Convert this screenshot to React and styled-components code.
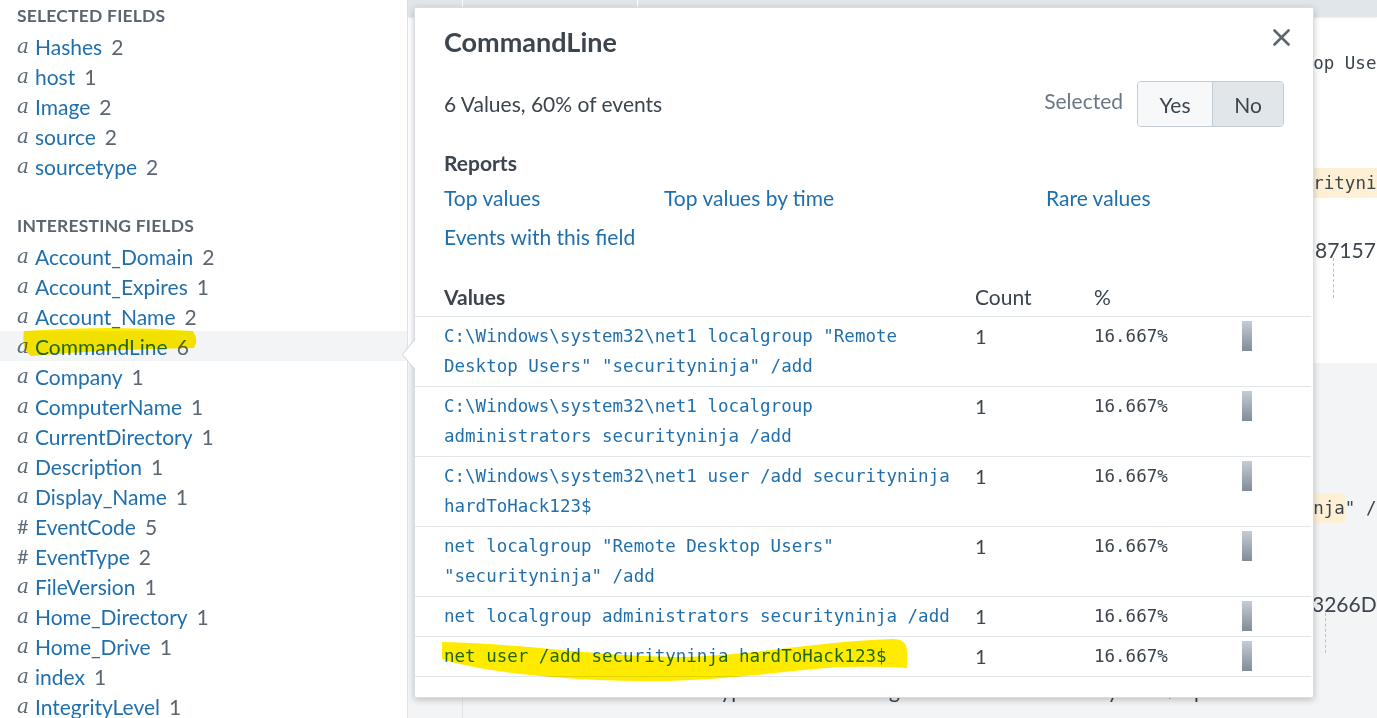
import React from "react";
import styled, { createGlobalStyle } from "styled-components";

const SANS = `Lato, "Open Sans", "Liberation Sans", sans-serif`;
const MONO = `"DejaVu Sans Mono", "Liberation Mono", monospace`;
const SERIF = `"DejaVu Serif", "Liberation Serif", serif`;

const GlobalStyle = createGlobalStyle`
  html, body { margin: 0; padding: 0; background: #fff; }
  body { font-family: ${SANS}; overflow: hidden; }
  * { box-sizing: border-box; }
`;

const Page = styled.div`
  position: relative;
  display: flex;
  width: 1377px;
  height: 718px;
  overflow: hidden;
  background: #fff;
`;

/* ---------- sidebar ---------- */
const Sidebar = styled.aside`
  flex: 0 0 408px;
  border-right: 1px solid #dfe3e8;
  padding-top: 1px;
  background: #fff;
`;

const SectionTitle = styled.div`
  padding-left: 17px;
  height: 30px;
  line-height: 30px;
  margin-top: ${(p) => (p.$gap ? "30px" : "0")};
  font-size: 17.5px;
  font-weight: 700;
  letter-spacing: 0.2px;
  color: #5c6670;
  text-transform: uppercase;
`;

const FieldRow = styled.div`
  display: flex;
  align-items: center;
  height: 30px;
  padding-left: 17px;
  background: ${(p) => (p.$active ? "#f2f4f5" : "transparent")};
  font-size: 21px;
  white-space: nowrap;
`;

const TypeGlyph = styled.span`
  flex: 0 0 18px;
  color: #5f6b78;
  font-family: ${(p) => (p.$num ? SANS : SERIF)};
  font-style: ${(p) => (p.$num ? "normal" : "italic")};
  font-size: 20px;
`;

const FieldName = styled.span`
  color: #1f6fad;
`;

const FieldCount = styled.span`
  margin-left: 9px;
  color: #5c6670;
`;

/* ---------- main event list ---------- */
const Main = styled.main`
  flex: 1;
  min-width: 0;
  display: flex;
  flex-direction: column;
  background: #f2f4f5;
`;

const TableHead = styled.div`
  flex: 0 0 17px;
  display: flex;
  background: #e1e6eb;
  box-shadow: 0 1px 2px rgba(0, 0, 0, 0.08);
  position: relative;
  z-index: 1;
`;

const HeadCell = styled.div`
  flex: ${(p) => (p.$w ? `0 0 ${p.$w}px` : "1")};
  border-left: ${(p) => (p.$sep ? "1px solid #fff" : "none")};
`;

const EventRow = styled.div`
  display: flex;
  flex: ${(p) => (p.$h ? `0 0 ${p.$h}px` : "1")};
  background: ${(p) => p.$bg};
  min-height: 0;
`;

const ExpandCell = styled.div`
  flex: 0 0 54px;
`;

const TimeCell = styled.div`
  flex: 0 0 175px;
  border-left: 1px solid #e1e6eb;
`;

const EventCell = styled.div`
  flex: 1;
  min-width: 0;
  padding: ${(p) => p.$top}px 0 0 15px;
  overflow: hidden;
  color: #3c444d;
`;

const RawLine = styled.div`
  font-family: ${MONO};
  font-size: 17.5px;
  line-height: 30px;
  height: 30px;
  white-space: pre;
  padding-left: 8px;
`;

const Mark = styled.span`
  background: #fdf0d5;
  display: inline-block;
  height: 30px;
`;

const FieldLine = styled.div`
  display: flex;
  margin-top: ${(p) => p.$mt}px;
  font-size: 21px;
  line-height: 30px;
  height: 30px;
  white-space: nowrap;
`;

const FieldKey = styled.span`
  flex: 0 0 ${(p) => p.$w}px;
  overflow: hidden;
`;

const DashLine = styled.div`
  margin: ${(p) => p.$mt}px 0 0 ${(p) => p.$ml}px;
  height: 40px;
  width: 0;
  border-left: 1px dashed #b8c0c9;
`;

const MetaLine = styled.div`
  margin-top: ${(p) => p.$mt}px;
  font-size: 21px;
  line-height: 30px;
  white-space: nowrap;
`;

/* ---------- popover ---------- */
const Popover = styled.section`
  position: absolute;
  left: 414px;
  top: 7px;
  width: 900px;
  height: 691px;
  background: #fff;
  border: 1px solid #d8dde3;
  border-radius: 2px;
  box-shadow: 0 2px 7px rgba(0, 0, 0, 0.22);
  z-index: 5;
  color: #3c444d;
  font-size: 21px;
`;

const Caret = styled.svg`
  position: absolute;
  left: -13px;
  top: 331px;
  overflow: visible;
`;

const PopHeader = styled.div`
  display: flex;
  justify-content: space-between;
  align-items: flex-start;
  padding: 17px 23px 0 29px;
`;

const PopTitle = styled.h2`
  margin: 0;
  font-size: 27px;
  line-height: 34px;
  font-weight: 700;
  color: #3c444d;
`;

const CloseButton = styled.button`
  margin-top: 3px;
  width: 18px;
  height: 18px;
  padding: 0;
  border: 0;
  background: none;
  display: flex;
  align-items: center;
  justify-content: center;
`;

const SummaryRow = styled.div`
  display: flex;
  align-items: center;
  justify-content: space-between;
  height: 46px;
  margin-top: 22px;
  padding: 0 29px;
`;

const SummaryText = styled.span`
  margin-top: -2px;
`;

const SelectedGroup = styled.div`
  display: flex;
  align-items: center;
  gap: 14px;
`;

const SelectedLabel = styled.span`
  color: #6b7785;
  margin-bottom: 7px;
`;

const Toggle = styled.div`
  display: flex;
  height: 46px;
  border: 1px solid #c3cbd4;
  border-radius: 4px;
  overflow: hidden;
`;

const ToggleButton = styled.button`
  width: ${(p) => p.$w}px;
  border: 0;
  border-left: ${(p) => (p.$first ? "0" : "1px solid #c3cbd4")};
  background: ${(p) => (p.$on ? "#e1e6eb" : "#f7f8fa")};
  font-family: ${SANS};
  font-size: 21px;
  color: #3c444d;
  padding: 0;
`;

const SubHeading = styled.h3`
  margin: 21px 0 0;
  padding-left: 29px;
  font-size: 21px;
  line-height: 30px;
  font-weight: 700;
`;

const LinkGrid = styled.div`
  display: grid;
  grid-template-columns: 220px 382px auto;
  row-gap: 9px;
  margin-top: 5px;
  padding: 0 29px;
`;

const ReportLink = styled.a`
  color: #1f6fad;
  line-height: 30px;
  text-decoration: none;
  cursor: pointer;
`;

const ValuesTable = styled.div`
  margin-top: 25px;
  width: 896px;
`;

const TRow = styled.div`
  display: grid;
  grid-template-columns: 560px 119px 148px 1fr;
  align-items: ${(p) => (p.$head ? "center" : "start")};
  height: ${(p) => (p.$head ? "40px" : "auto")};
  padding: ${(p) => (p.$head ? "0" : "4px 0 5px")};
  border-bottom: 1px solid #e1e6eb;
`;

const HeadLabel = styled.div`
  padding-left: ${(p) => (p.$first ? "29px" : "0")};
  font-weight: ${(p) => (p.$bold ? 700 : 400)};
`;

const ValueCell = styled.div`
  padding: 0 14px 0 29px;
  font-family: ${MONO};
  font-size: 17.5px;
  line-height: 30px;
  color: #1f6fad;
`;

const CountCell = styled.div`
  line-height: 30px;
  font-size: 20px;
`;

const PctCell = styled.div`
  font-family: ${MONO};
  font-size: 17.5px;
  line-height: 30px;
`;

const Bar = styled.div`
  width: 10px;
  height: 30px;
  background: linear-gradient(#c5ccd4, #818c98);
`;

const Annotations = styled.svg`
  position: absolute;
  left: 0;
  top: 0;
  z-index: 10;
  pointer-events: none;
  mix-blend-mode: multiply;
`;

/* ---------- data ---------- */
const selectedFields = [
  ["a", "Hashes", 2],
  ["a", "host", 1],
  ["a", "Image", 2],
  ["a", "source", 2],
  ["a", "sourcetype", 2],
];

const interestingFields = [
  ["a", "Account_Domain", 2],
  ["a", "Account_Expires", 1],
  ["a", "Account_Name", 2],
  ["a", "CommandLine", 6, true],
  ["a", "Company", 1],
  ["a", "ComputerName", 1],
  ["a", "CurrentDirectory", 1],
  ["a", "Description", 1],
  ["a", "Display_Name", 1],
  ["#", "EventCode", 5],
  ["#", "EventType", 2],
  ["a", "FileVersion", 1],
  ["a", "Home_Directory", 1],
  ["a", "Home_Drive", 1],
  ["a", "index", 1],
  ["a", "IntegrityLevel", 1],
];

const values = [
  String.raw`C:\Windows\system32\net1 localgroup "Remote Desktop Users" "securityninja" /add`,
  String.raw`C:\Windows\system32\net1 localgroup administrators securityninja /add`,
  String.raw`C:\Windows\system32\net1 user /add securityninja hardToHack123$`,
  `net localgroup "Remote Desktop Users" "securityninja" /add`,
  `net localgroup administrators securityninja /add`,
  `net user /add securityninja hardToHack123$`,
];

function Field({ f }) {
  const [type, name, count, active] = f;
  return (
    <FieldRow $active={active}>
      <TypeGlyph $num={type === "#"}>{type}</TypeGlyph>
      <FieldName>{name}</FieldName>
      <FieldCount>{count}</FieldCount>
    </FieldRow>
  );
}

export default function App() {
  return (
    <Page>
      <GlobalStyle />
      <Sidebar>
        <SectionTitle>Selected Fields</SectionTitle>
        {selectedFields.map((f) => (
          <Field key={f[1]} f={f} />
        ))}
        <SectionTitle $gap>Interesting Fields</SectionTitle>
        {interestingFields.map((f) => (
          <Field key={f[1]} f={f} />
        ))}
      </Sidebar>

      <Main>
        <TableHead>
          <HeadCell $w={54} />
          <HeadCell $w={175} $sep />
          <HeadCell $sep />
        </TableHead>

        <EventRow $h={346} $bg="#fff">
          <ExpandCell />
          <TimeCell />
          <EventCell $top={1}>
            <RawLine>05/14/2021 10:42:17 AM</RawLine>
            <RawLine>{String.raw`CommandLine: C:\Windows\system32\net1 localgroup "Remote Desktop Users" "securityninja" /add`}</RawLine>
            <RawLine>LogName=Microsoft-Windows-Sysmon/Operational</RawLine>
            <RawLine>EventCode=1</RawLine>
            <RawLine>EventType=4</RawLine>
            <RawLine>
              {`ParentCommandLine: net localgroup "Remote Desktop Users" "`}
              <Mark>securityninja</Mark>
              {`" /add`}
            </RawLine>
            <FieldLine $mt={37}>
              <FieldKey $w={663}>Hashes = SHA1=F5E6A2C09D1B7C4E3A0B</FieldKey>
              <span>87157F3C2D1A9E0B,MD5=0BD94A33</span>
            </FieldLine>
            <DashLine $mt={-7} $ml={681} />
          </EventCell>
        </EventRow>

        <EventRow $bg="#f2f4f5">
          <ExpandCell />
          <TimeCell />
          <EventCell $top={10}>
            <RawLine>05/14/2021 10:41:58 AM</RawLine>
            <RawLine>LogName=Microsoft-Windows-Sysmon/Operational</RawLine>
            <RawLine>EventCode=1</RawLine>
            <RawLine>EventType=4</RawLine>
            <RawLine>
              {`CommandLine: net localgroup "Remote Desktop Users" "`}
              <Mark>securityninja</Mark>
              {`" /add`}
            </RawLine>
            <RawLine>User=DESKTOP\admin</RawLine>
            <FieldLine $mt={36}>
              <FieldKey $w={660}>Hashes = SHA1=0A9C44B2E71D5F</FieldKey>
              <span>3266D2A8F0C1B7E49</span>
            </FieldLine>
            <DashLine $mt={-6} $ml={673} />
            <MetaLine $mt={22}>sourcetype = WinEventLog:Microsoft-Windows-Sysmon/Operational</MetaLine>
          </EventCell>
        </EventRow>
      </Main>

      <Popover>
        <Caret width="13" height="31" viewBox="0 0 13 31">
          <polygon points="14,0 0.5,15.5 14,31" fill="#fff" />
          <polyline points="13,0 0.5,15.5 13,31" fill="none" stroke="#cdd3da" strokeWidth="1" />
        </Caret>

        <PopHeader>
          <PopTitle>CommandLine</PopTitle>
          <CloseButton aria-label="Close">
            <svg width="17" height="17" viewBox="0 0 17 17">
              <path d="M1.5 1.5 L15.5 15.5 M15.5 1.5 L1.5 15.5" stroke="#5c6670" strokeWidth="2.6" strokeLinecap="round" />
            </svg>
          </CloseButton>
        </PopHeader>

        <SummaryRow>
          <SummaryText>6 Values, 60% of events</SummaryText>
          <SelectedGroup>
            <SelectedLabel>Selected</SelectedLabel>
            <Toggle>
              <ToggleButton $first $w={74}>Yes</ToggleButton>
              <ToggleButton $on $w={71}>No</ToggleButton>
            </Toggle>
          </SelectedGroup>
        </SummaryRow>

        <SubHeading>Reports</SubHeading>
        <LinkGrid>
          <ReportLink>Top values</ReportLink>
          <ReportLink>Top values by time</ReportLink>
          <ReportLink>Rare values</ReportLink>
          <ReportLink>Events with this field</ReportLink>
        </LinkGrid>

        <ValuesTable>
          <TRow $head>
            <HeadLabel $first $bold>Values</HeadLabel>
            <HeadLabel>Count</HeadLabel>
            <HeadLabel>%</HeadLabel>
            <div />
          </TRow>
          {values.map((v) => (
            <TRow key={v}>
              <ValueCell>{v}</ValueCell>
              <CountCell>1</CountCell>
              <PctCell>16.667%</PctCell>
              <Bar />
            </TRow>
          ))}
        </ValuesTable>
      </Popover>

      <Annotations width="1377" height="718" viewBox="0 0 1377 718">
        <path
          d="M24 331 Q110 325 193 331 Q199 340 194 348 Q110 349 31 356 Q21 350 24 331 Z"
          fill="#ffeb00"
        />
        <path
          d="M442 642 C520 643 600 657 680 657 C760 655 820 641 893 639 Q907 639 907 652 L907 668 Q880 666 840 667 C780 671 720 682 640 681 C560 680 480 672 442 659 Z"
          fill="#ffeb00"
        />
      </Annotations>
    </Page>
  );
}
